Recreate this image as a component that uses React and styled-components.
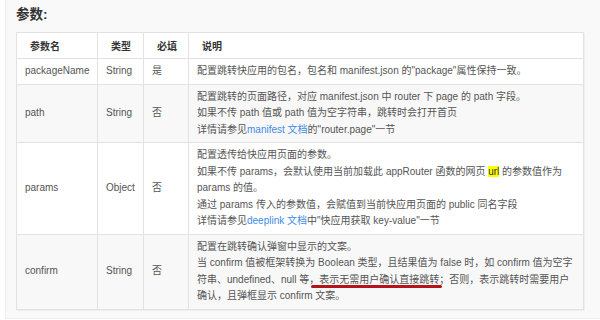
import React from "react";
import styled, { createGlobalStyle } from "styled-components";

const GlobalStyle = createGlobalStyle`
  html, body {
    margin: 0;
    padding: 0;
    background: #ffffff;
  }
  body {
    font-family: "Liberation Sans", "Noto Sans CJK SC", sans-serif;
  }
`;

const Panel = styled.div`
  margin-left: 5px;
  height: 319px;
  box-sizing: border-box;
  background: #f9f9f9;
  border-left: 1px solid #eeeeee;
  border-bottom: 1px solid #eeeeee;
  padding: 5px 0 0 10px;
`;

const Title = styled.h3`
  margin: 0 0 7px;
  font-size: 13.5px;
  line-height: 20px;
  font-weight: 700;
  color: #333;
`;

const Table = styled.table`
  width: 568px;
  table-layout: fixed;
  border-collapse: collapse;
  background: #fff;
  border: 1px solid #e2e2e2;
  box-shadow: 1px 1px 0 #efefef;
  font-size: 10px;
  color: #555;
`;

const Col = styled.col`
  width: ${(p) => p.$w};
`;

const Th = styled.th`
  height: 26px;
  box-sizing: border-box;
  padding: 0 0 0 13px;
  text-align: left;
  font-weight: 700;
  color: #333;
  border: 1px solid #e2e2e2;
  white-space: nowrap;
`;

const Row = styled.tr`
  background: ${(p) => (p.$alt ? "#f8f8f8" : "#ffffff")};
`;

const Td = styled.td`
  padding: 4px 0 4px 8px;
  line-height: 16.5px;
  border: 1px solid #e2e2e2;
  vertical-align: middle;
  white-space: nowrap;
`;

const Line = styled.div`
  height: 16.5px;
`;

const Link = styled.a`
  color: #3d8be6;
  text-decoration: none;
`;

const Mark = styled.span`
  background: #ffff00;
  color: #333;
`;

const Annotated = styled.span`
  position: relative;

  &::after {
    content: "";
    position: absolute;
    left: 2px;
    right: -3px;
    bottom: -3px;
    height: 2.5px;
    border-radius: 2px;
    background: #b3151b;
  }
`;

export default function App() {
  return (
    <>
      <GlobalStyle />
      <Panel>
        <Title>参数:</Title>
        <Table>
          <colgroup>
            <Col $w="81px" />
            <Col $w="46px" />
            <Col $w="45px" />
            <Col $w="auto" />
          </colgroup>
          <thead>
            <tr>
              <Th>参数名</Th>
              <Th>类型</Th>
              <Th>必填</Th>
              <Th>说明</Th>
            </tr>
          </thead>
          <tbody>
            <Row>
              <Td>packageName</Td>
              <Td>String</Td>
              <Td>是</Td>
              <Td>
                配置跳转快应用的包名，包名和 manifest.json 的"package"属性保持一致。
              </Td>
            </Row>
            <Row $alt>
              <Td>path</Td>
              <Td>String</Td>
              <Td>否</Td>
              <Td>
                <Line>配置跳转的页面路径，对应 manifest.json 中 router 下 page 的 path 字段。</Line>
                <Line>如果不传 path 值或 path 值为空字符串，跳转时会打开首页</Line>
                <Line>
                  详情请参见<Link>manifest 文档</Link>的"router.page"一节
                </Line>
              </Td>
            </Row>
            <Row>
              <Td>params</Td>
              <Td>Object</Td>
              <Td>否</Td>
              <Td>
                <Line>配置透传给快应用页面的参数。</Line>
                <Line>
                  如果不传 params，会默认使用当前加载此 appRouter 函数的网页 <Mark>url</Mark> 的参数值作为
                </Line>
                <Line>params 的值。</Line>
                <Line>通过 params 传入的参数值，会赋值到当前快应用页面的 public 同名字段</Line>
                <Line>
                  详情请参见<Link>deeplink 文档</Link>中"快应用获取 key-value"一节
                </Line>
              </Td>
            </Row>
            <Row $alt>
              <Td>confirm</Td>
              <Td>String</Td>
              <Td>否</Td>
              <Td>
                <Line>配置在跳转确认弹窗中显示的文案。</Line>
                <Line>当 confirm 值被框架转换为 Boolean 类型，且结果值为 false 时，如 confirm 值为空字</Line>
                <Line>
                  符串、undefined、null 等<Annotated>，表示无需用户确认直接跳转</Annotated>；否则，表示跳转时需要用户
                </Line>
                <Line>确认，且弹框显示 confirm 文案。</Line>
              </Td>
            </Row>
          </tbody>
        </Table>
      </Panel>
    </>
  );
}
